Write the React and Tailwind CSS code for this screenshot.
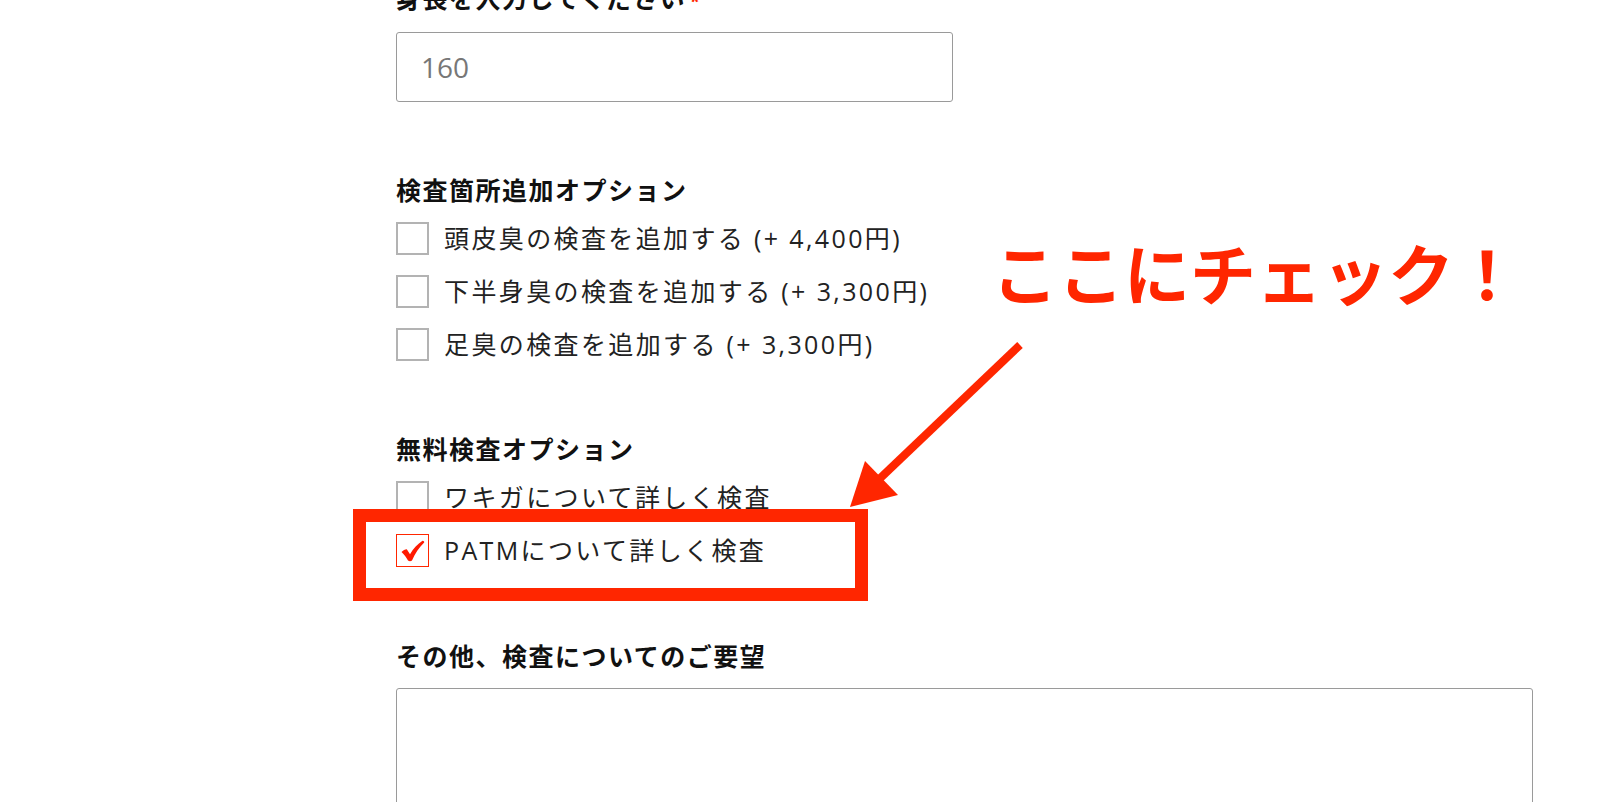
import React from 'react';

const font = { fontFamily: '"Open Sans", "Noto Sans CJK JP", sans-serif' };

const Box = ({ checked }) => (
  <span
    className={`w-[33px] h-[33px] shrink-0 flex items-center justify-center ${
      checked ? 'border border-[#ff2600]' : 'border-2 border-[#b3b3b3]'
    }`}
  >
    {checked && (
      <svg width="26" height="24" viewBox="0 0 26 24">
        <path
          d="M1.5 13 C3 11.5 5 10.5 6.8 10.3 L10 15.2 C13.5 9.5 17.5 5 22.5 1.8 C23.6 1.8 24.4 2.6 24.2 3.6 C19 8.5 15 14.5 12 21.6 C11 22.6 9 22.6 8 21.6 C6.3 18.5 4.2 15.5 1.5 13 Z"
          fill="#ff1a00"
        />
      </svg>
    )}
  </span>
);

const Option = ({ label, checked }) => (
  <label className="h-[53px] flex items-center gap-[15px] text-[25px] tracking-[0.095em] text-[#222]">
    <Box checked={checked} />
    <span>{label}</span>
  </label>
);

const headingCls = 'h-[36px] leading-[36px] text-[25px] font-bold tracking-[0.06em] text-[#111]';

export default function App() {
  return (
    <div className="relative w-[1600px] h-[802px] overflow-hidden bg-white" style={font}>
      <div className="pl-[396px] -mt-[20px]">
        <h3 className={headingCls}>
          身長を入力してください<span className="ml-[4px] text-[#ff2600] text-[18px]">*</span>
        </h3>

        <div className="mt-[16px] w-[557px] h-[70px] border-[1.5px] border-[#9a9a9a] rounded-[3px] flex items-center pl-[24px] text-[28px] text-[#777]">
          160
        </div>

        <h3 className={`mt-[70px] ${headingCls}`}>検査箇所追加オプション</h3>
        <div className="mt-[4px] flex flex-col">
          <Option label="頭皮臭の検査を追加する (+ 4,400円)" />
          <Option label="下半身臭の検査を追加する (+ 3,300円)" />
          <Option label="足臭の検査を追加する (+ 3,300円)" />
        </div>

        <h3 className={`mt-[60px] ${headingCls}`}>無料検査オプション</h3>
        <div className="mt-[4px] flex flex-col">
          <Option label="ワキガについて詳しく検査" />
          <Option label="PATMについて詳しく検査" checked />
        </div>

        <h3 className={`mt-[61px] ${headingCls}`}>その他、検査についてのご要望</h3>
        <div className="mt-[14px] w-[1137px] h-[200px] border-[1.5px] border-[#9a9a9a] rounded-[3px]" />
      </div>

      {/* annotation */}
      <div className="absolute left-[353px] top-[509px] w-[515px] h-[92px] border-[13px] border-[#ff2600]" />
      <svg className="absolute left-0 top-0" width="1600" height="802">
        <line x1="1020" y1="345" x2="872" y2="486" stroke="#ff2600" strokeWidth="8" />
        <polygon points="850,507 865,461 898,495" fill="#ff2600" />
      </svg>
      <div className="absolute left-[992px] top-[241px] text-[66px] leading-[66px] font-bold text-[#ff2600] whitespace-nowrap">
        ここにチェック！
      </div>
    </div>
  );
}
